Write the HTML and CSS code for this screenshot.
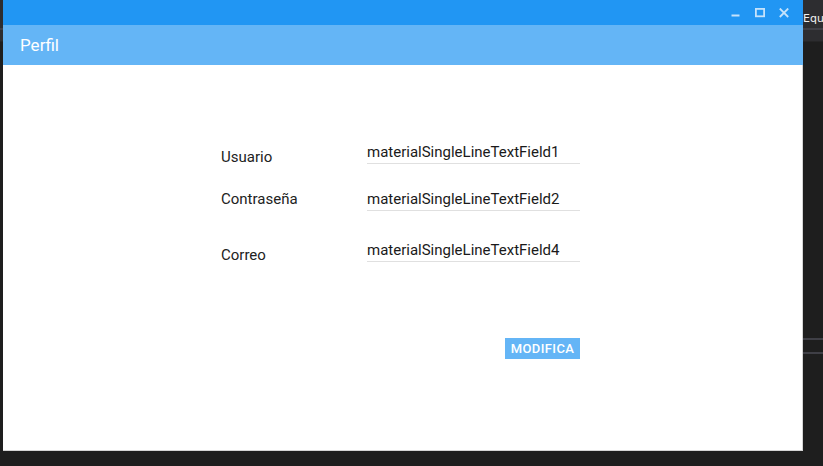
FILE: index.html
```html
<!DOCTYPE html>
<html lang="es">
<head>
<meta charset="utf-8">
<title>Perfil</title>
<link rel="stylesheet" href="styles.css">
</head>
<body>
<div class="desktop">
  <div class="side side-left">
    <div class="side-top"></div>
    <div class="side-line"></div>
    <div class="side-sub"></div>
  </div>
  <div class="window">
    <div class="titlebar">
      <button class="ctl" aria-label="Minimizar">
        <svg width="10" height="10" viewBox="0 0 10 10"><rect x="0.5" y="6.5" width="8" height="2" fill="currentColor"/></svg>
      </button>
      <button class="ctl" aria-label="Maximizar">
        <svg width="10" height="10" viewBox="0 0 10 10"><rect x="0.9" y="0.9" width="8.2" height="7.4" fill="none" stroke="currentColor" stroke-width="1.8"/></svg>
      </button>
      <button class="ctl" aria-label="Cerrar">
        <svg width="10" height="10" viewBox="0 0 10 10"><path d="M0.8 0.5 L9.2 9 M9.2 0.5 L0.8 9" stroke="currentColor" stroke-width="1.8" fill="none"/></svg>
      </button>
    </div>
    <div class="header">Perfil</div>
    <div class="content">
      <div class="form">
        <div class="row row-1">
          <span class="label label-low">Usuario</span>
          <span class="field">materialSingleLineTextField1</span>
        </div>
        <div class="row row-2">
          <span class="label label-high">Contraseña</span>
          <span class="field">materialSingleLineTextField2</span>
        </div>
        <div class="row row-3">
          <span class="label label-low">Correo</span>
          <span class="field">materialSingleLineTextField4</span>
        </div>
        <div class="actions">
          <button class="btn">MODIFICA</button>
        </div>
      </div>
    </div>
  </div>
  <div class="side side-right">
    <div class="side-top"><span class="side-text">Equ</span></div>
    <div class="side-line"></div>
    <div class="side-sub"></div>
    <div class="side-rest">
      <div class="rule"></div>
      <div class="rule rule-2"></div>
    </div>
  </div>
</div>
</body>
</html>
```
FILE: styles.css
```css
html, body {
  margin: 0;
  padding: 0;
  background: #1e1e1e;
  height: 100%;
  overflow: hidden;
}

.desktop {
  display: flex;
  width: 823px;
  height: 466px;
  font-family: Roboto, "Liberation Sans", sans-serif;
}

.side {
  display: flex;
  flex-direction: column;
  overflow: hidden;
}
.side-left { width: 3px; }
.side-right { flex: 1; }

.side-top {
  height: 28px;
  background: #2d2d30;
  display: flex;
  align-items: center;
}
.side-line { height: 2px; background: #3f3f46; }
.side-sub { height: 11px; background: #2d2d30; border-bottom: 1px solid #252526; }
.side-rest { flex: 1; padding-top: 296px; }
.side-text {
  font-family: "DejaVu Sans", sans-serif;
  font-size: 11px;
  color: #f1f1f1;
  white-space: nowrap;
  padding-top: 8px;
}
.rule { height: 2px; background: #3f3f46; }
.rule-2 { margin-top: 12px; }

.window {
  width: 800px;
  height: 451px;
  display: flex;
  flex-direction: column;
}

.titlebar {
  height: 25px;
  background: #2196f3;
  display: flex;
  justify-content: flex-end;
  align-items: flex-start;
  padding-right: 14px;
  gap: 14px;
}
.ctl {
  border: 0;
  padding: 0;
  margin: 0;
  background: none;
  color: #c4e2fb;
  width: 10px;
  height: 10px;
  margin-top: 8px;
  display: block;
}
.ctl svg { display: block; }

.header {
  height: 40px;
  background: #64b5f6;
  color: #ffffff;
  font-size: 17px;
  font-weight: 400;
  line-height: 40px;
  padding-left: 17px;
  box-sizing: border-box;
}

.content {
  flex: 1;
  background: #ffffff;
  border-right: 1px solid #d4d4d4;
  border-bottom: 1px solid #d4d4d4;
  padding-top: 78px;
  padding-left: 218px;
}

.form {
  width: 359px;
  display: flex;
  flex-direction: column;
}

.row {
  display: flex;
  align-items: flex-start;
}
.row-2 { margin-top: 25px; }
.row-3 { margin-top: 30px; }

.label {
  width: 146px;
  font-size: 15px;
  line-height: 16px;
  color: #222222;
}
.label-low { margin-top: 6px; }
.label-high { margin-top: 1px; }

.field {
  width: 213px;
  height: 20px;
  font-size: 15px;
  line-height: 18px;
  color: #1a1a1a;
  border-bottom: 1px solid #e0e0e0;
  white-space: nowrap;
}

.actions {
  display: flex;
  justify-content: flex-end;
  margin-top: 75px;
}
.btn {
  border: 0;
  margin: 0;
  padding: 0;
  width: 75px;
  height: 21px;
  background: #64b5f6;
  color: #ffffff;
  font-family: Roboto, "Liberation Sans", sans-serif;
  font-size: 13px;
  font-weight: 500;
  letter-spacing: 0.4px;
  line-height: 21px;
  text-align: center;
}
```
